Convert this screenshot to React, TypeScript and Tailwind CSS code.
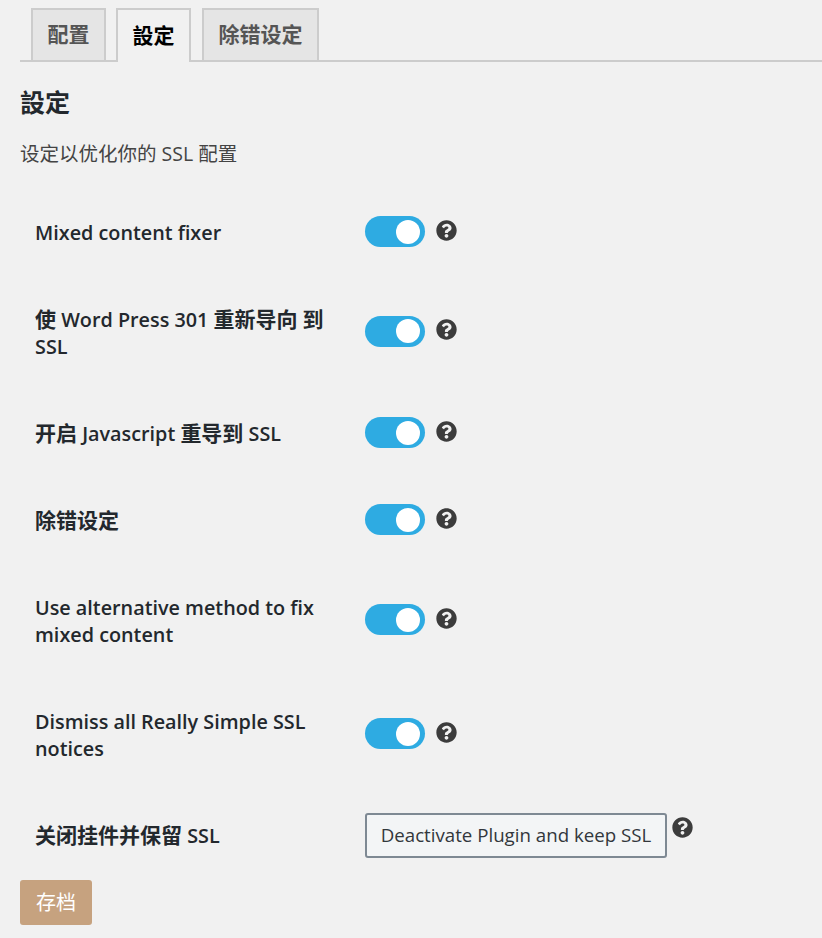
const FONT = "font-['Open_Sans','Noto_Sans_CJK_SC',sans-serif]";

type Row = { label: React.ReactNode; shift: string };

// CJK glyphs sit a little larger than the latin text next to them
function Cjk({ children }: { children: React.ReactNode }) {
  return <span className="text-[21px]">{children}</span>;
}

const ROWS: Row[] = [
  { label: "Mixed content fixer", shift: "-mt-[2px]" },
  {
    label: (
      <>
        <Cjk>使</Cjk> Word Press 301 <Cjk>重新导向</Cjk> <Cjk>到</Cjk> SSL
      </>
    ),
    shift: "-mt-[4px]",
  },
  {
    label: (
      <>
        <Cjk>开启</Cjk> Javascript <Cjk>重导到</Cjk> SSL
      </>
    ),
    shift: "-mt-[2px]",
  },
  { label: <Cjk>除错设定</Cjk>, shift: "-mt-[2px]" },
  { label: "Use alternative method to fix mixed content", shift: "-mt-[3px]" },
  { label: "Dismiss all Really Simple SSL notices", shift: "-mt-[3px]" },
];

function HelpIcon({ className }: { className?: string }) {
  return (
    <svg viewBox="0 0 512 512" className={`h-[21px] w-[21px] shrink-0 fill-[#3c3c3c] ${className ?? ""}`}>
      <path d="M504 256c0 137-111 248-248 248S8 393 8 256C8 119 119 8 256 8s248 111 248 248zM262.700 90c-54.500 0-89.300 23-116.600 63.800-3.500 5.300-2.400 12.400 2.700 16.300l34.700 26.300c5.200 3.900 12.600 3 16.700-2.100 17.900-22.700 30.200-35.800 57.300-35.800 20.400 0 45.700 13.100 45.700 32.900 0 15-12.400 22.700-32.600 34-23.600 13.200-54.800 29.700-54.800 70.900V302c0 6.600 5.400 12 12 12h56c6.600 0 12-5.400 12-12v-1.300c0-28.600 83.500-29.800 83.500-107.100 0-58.200-60.400-102.600-116.600-102.600zM256 339c-25.500 0-46.200 20.700-46.200 46.200 0 25.500 20.700 46.200 46.200 46.200s46.200-20.700 46.200-46.200c0-25.500-20.700-46.200-46.200-46.200z" />
    </svg>
  );
}

function Toggle() {
  return (
    <span className="flex h-[31px] w-[60px] shrink-0 items-center justify-end rounded-full bg-[#2eabe2] pr-[5px]">
      <span className="h-[24px] w-[24px] rounded-full bg-white" />
    </span>
  );
}

export default function App() {
  return (
    <div className={`${FONT} h-[938px] w-[822px] overflow-hidden bg-[#f1f1f1] pl-[20px] text-[#23282d]`}>
      <div className="flex h-[62px] items-end gap-[10px] border-b-2 border-[#cccccc] pl-[11px]">
        <div className="-mb-[2px] flex h-[54px] w-[75px] items-center justify-center border-2 border-[#cccccc] bg-[#e5e5e5] text-[21px] font-semibold text-[#555555]">
          配置
        </div>
        <div className="-mb-[2px] flex h-[54px] w-[75px] items-center justify-center border-2 border-b-0 border-[#cccccc] bg-[#f1f1f1] text-[21px] font-semibold text-black">
          設定
        </div>
        <div className="-mb-[2px] ml-px flex h-[54px] w-[117px] items-center justify-center border-2 border-[#cccccc] bg-[#e5e5e5] text-[21px] font-semibold text-[#555555]">
          除错设定
        </div>
      </div>

      <h2 className="mt-[25px] text-[25px] leading-[30px] font-semibold">設定</h2>
      <p className="mt-[22px] text-[19.500px] leading-[30px] text-[#444444]">设定以优化你的 SSL 配置</p>

      <div className="mt-[20px]">
        {ROWS.map((row, i) => (
          <div key={i} className="flex items-center">
            <div className="w-[345px] py-[30px] pl-[15px] pr-[20px] text-[19.800px] leading-[27px] font-semibold">{row.label}</div>
            <div className={`flex items-center gap-[11px] ${row.shift}`}>
              <Toggle />
              <HelpIcon className="-mt-[3px]" />
            </div>
          </div>
        ))}
        <div className="flex items-center">
          <div className="w-[345px] py-[30px] pl-[15px] text-[19.800px] leading-[27px] font-semibold">
            <Cjk>关闭挂件并保留</Cjk> SSL
          </div>
          <button className="flex h-[45px] w-[302px] items-center justify-center rounded-[3px] border-2 border-[#7e8993] bg-[#f3f5f6] text-[18.700px] text-[#32373c]">
            Deactivate Plugin and keep SSL
          </button>
          <HelpIcon className="-mt-[16px] ml-[5px]" />
        </div>
      </div>

      <button className="mt-px flex h-[45px] w-[72px] items-center justify-center rounded-[3px] bg-[#c6a27f] text-[20px] text-white">
        存档
      </button>
    </div>
  );
}
